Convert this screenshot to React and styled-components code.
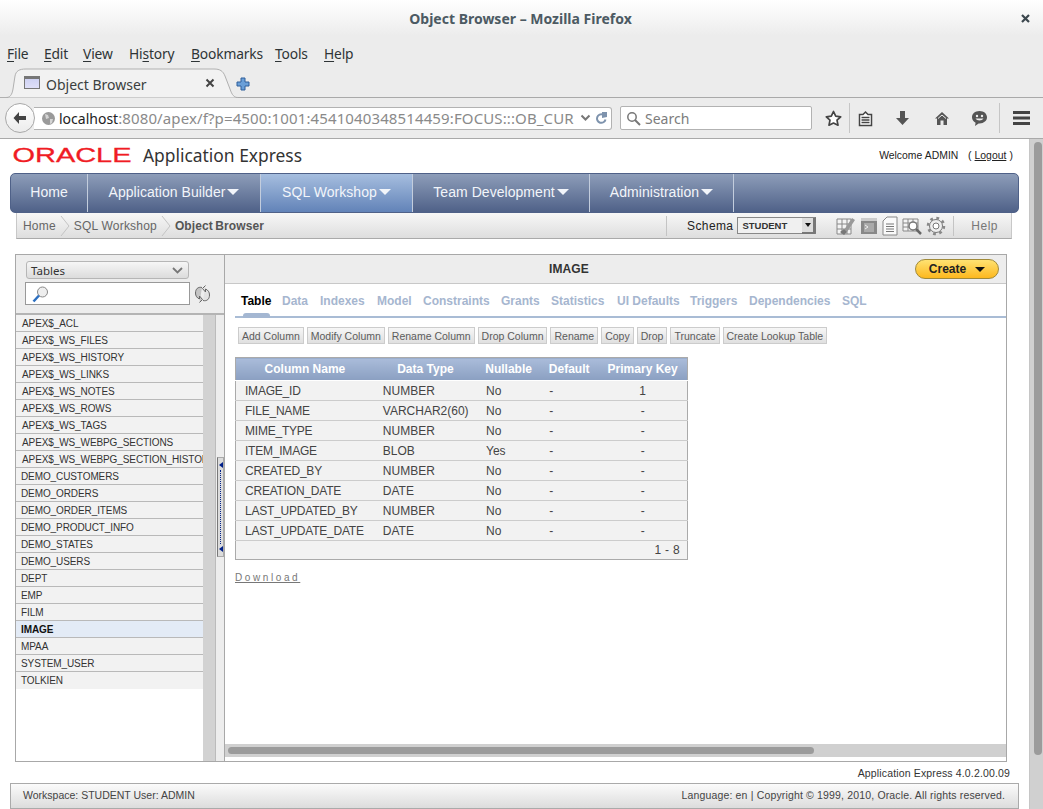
import React from "react";
import styled, { createGlobalStyle } from "styled-components";

const Global = createGlobalStyle`
  html, body { margin: 0; padding: 0; background: #fff; overflow: hidden; }
  * { box-sizing: border-box; }
  #root { width: 1043px; height: 809px; overflow: hidden; }
`;

const Window = styled.div`
  width: 1043px; height: 809px; display: flex; flex-direction: column;
  font-family: "Liberation Sans", Arial, sans-serif; color: #333; overflow: hidden;
`;

/* ---------- browser chrome ---------- */
const Chrome = styled.div`
  height: 139px; flex: none; display: flex; flex-direction: column;
  font-family: "Noto Sans", sans-serif;
  background: linear-gradient(#fff 0, #ececec 36px, #ececec 100%);
  border-bottom: 1px solid #a9a9a9;
`;
const TitleBar = styled.div`
  height: 40px; flex: none; display: flex; align-items: center; padding: 0 12px 3px 0;
`;
const Title = styled.div`
  flex: 1; text-align: center; font-size: 14px; font-weight: 700; color: #4c5a63; margin-left: 21px;
`;
const MenuBar = styled.div`
  height: 28px; flex: none; display: flex; align-items: center; padding: 0 0 2px 7px; font-size: 13.8px; letter-spacing: -.15px; color: #2e3436;
`;
const MenuItem = styled.span`
  width: ${p => p.$w}px; flex: none; u { text-underline-offset: 2px; }
`;
const TabStrip = styled.div`
  height: 30px; flex: none; display: flex; align-items: flex-end; border-bottom: 1px solid #a9a9a9; padding-left: 6px;
`;
const BrowserTab = styled.div`
  position: relative; width: 232px; height: 30px; margin-bottom: -1px; display: flex; align-items: center;
  padding: 3px 0 0 18px; font-size: 14px; color: #3b3f40;
`;
const TabShape = styled.svg`
  position: absolute; left: 0; top: 0; width: 232px; height: 30px; overflow: visible;
`;
const Favicon = styled.div`
  position: relative; width: 16px; height: 13px; margin-top: -4px; border: 1px solid #777; border-top-width: 3px; background: linear-gradient(#cfd2f4, #dfe0f8); flex: none; margin-right: 6px;
`;
const TabLabel = styled.span`
  position: relative; flex: 1;
`;
const TabClose = styled.svg`
  position: relative; width: 10px; height: 10px; margin: -4px 23px 0 0;
`;
const NewTab = styled.svg`
  width: 14px; height: 14px; margin: 0 0 6px -2px;
`;
const NavBar = styled.div`
  flex: 1; display: flex; align-items: center; padding: 0 0 0 5px;
`;
const BackButton = styled.div`
  width: 30px; height: 30px; border-radius: 50%; border: 1px solid #a8a8a8; background: linear-gradient(#fff, #ececec);
  display: flex; align-items: center; justify-content: center; flex: none; position: relative; z-index: 1;
`;
const UrlBox = styled.div`
  width: 578px; height: 23px; margin-left: -1px; border: 1px solid #b2b2b2; border-left: none; border-radius: 0 3px 3px 0; background: #fff;
  display: flex; align-items: center; padding-left: 7px; font-size: 15px; flex: none; color: #8a8a8a;
`;
const UrlText = styled.div`
  width: 518px; margin-left: 3px; white-space: nowrap; overflow: hidden; letter-spacing: .12px;
  b { font-weight: 400; font-size: 14px; letter-spacing: 0; color: #222; }
`;
const SearchBox = styled.div`
  width: 192px; height: 24px; margin-left: 8px; border: 1px solid #b2b2b2; border-radius: 2px; background: #fff; flex: none;
  display: flex; align-items: center; padding-left: 5px; gap: 4px; font-size: 14px; color: #7c7c7c;
`;
const ToolIcons = styled.div`
  display: flex; align-items: center; flex: none; height: 30px; margin-left: 6px;
`;
const ToolSlot = styled.div`
  width: ${p => p.$w}px; display: flex; justify-content: center; align-items: center; height: 30px;
  ${p => p.$sep ? "border-left: 1px solid #c6c6c6;" : ""}
`;

/* ---------- page ---------- */
const Viewport = styled.div`
  flex: 1; display: flex; min-height: 0;
`;
const Page = styled.div`
  width: 1029px; flex: none; display: flex; flex-direction: column; background: #fff; font-size: 11px;
`;
const Scrollbar = styled.div`
  flex: 1; background: #d0d0d0; padding: 3px 3px 0 4px; border-left: 1px solid #c6c6c6;
`;
const ScrollThumb = styled.div`
  height: 613px; width: 8px; border-radius: 4px; background: #9b9b9b;
`;
const Header = styled.div`
  height: 34px; flex: none; display: flex; align-items: center; padding: 0 16px 2px 13px;
`;
const Logo = styled.svg`
  width: 120px; height: 18px; flex: none; overflow: visible;
`;
const AppName = styled.div`
  margin-left: 10px; font-size: 17.4px; color: #333; flex: 1; font-family: "Noto Sans", sans-serif;
`;
const Welcome = styled.div`
  font-size: 10.4px; color: #222; word-spacing: .3px; u { color: #222; }
`;
const MainNav = styled.nav`
  height: 40px; margin-left: 10px; width: 1009px; flex: none; display: flex; border-radius: 5px; border: 1px solid #4f6188;
  background: linear-gradient(#8d9db9, #4f6188);
`;
const NavTab = styled.div`
  width: ${p => p.$w}px; flex: none; display: flex; align-items: center; justify-content: center; gap: 2px; padding-bottom: 2px;
  color: #f2f5fa; font-size: 14px; letter-spacing: .05px; border-right: 1px solid #c3cddd;
  ${p => p.$active ? "background: linear-gradient(#a6bedf, #6283b8);" : ""}
`;
const Caret = styled.span`
  width: 0; height: 0; border-left: 6px solid transparent; border-right: 6px solid transparent; border-top: 6px solid #f2f5fa;
`;
const Crumbs = styled.div`
  height: 26px; width: 996px; margin-left: 16px; flex: none; display: flex; align-items: center;
  background: linear-gradient(#f7f7f7, #dedede); border: 1px solid #c8c8c8; border-top: none; border-bottom: 1px solid #aaa;
  font-size: 12px; color: #666; padding-left: 6px; letter-spacing: .2px;
`;
const CrumbSep = styled.svg`
  width: 10px; height: 22px; margin: 0 4px; flex: none;
`;
const CrumbCurrent = styled.b`
  flex: 1; color: #555; word-spacing: -1px; letter-spacing: .1px;
`;
const SchemaArea = styled.div`
  width: 345px; height: 20px; flex: none; display: flex; align-items: center; border-left: 1px solid #c4c4c4; padding-left: 20px;
  color: #222; letter-spacing: .4px;
`;
const SchemaSelect = styled.div`
  width: 79px; height: 17px; margin-left: 4px; border: 1px solid #888; border-right-color: #777; background: #f0f0f0; display: flex; align-items: center;
  padding-left: 4px; font-size: 9.5px; font-weight: 700; color: #333; letter-spacing: 0; justify-content: space-between;
`;
const SchemaArrow = styled.div`
  width: 13px; height: 16px; background: #ddd; border-right: 2px solid #777; border-bottom: 2px solid #777; display: flex; align-items: center; justify-content: center;
  &::after { content: ""; border-left: 3px solid transparent; border-right: 3px solid transparent; border-top: 4px solid #111; }
`;
const SchemaIcons = styled.div`
  display: flex; align-items: center; gap: 2px; margin-left: 20px; width: 117px;
`;
const HelpLink = styled.div`
  flex: 1; height: 20px; border-left: 1px solid #c4c4c4; display: flex; align-items: center; justify-content: center; padding-left: 4px; color: #777; letter-spacing: .5px;
`;

/* ---------- object browser panel ---------- */
const Panel = styled.div`
  width: 992px; height: 508px; margin: 15px 0 0 15px; flex: none; display: flex; border: 1px solid #a8a8a8;
`;
const Sidebar = styled.aside`
  width: 209px; flex: none; display: flex; flex-direction: column; border-right: 1px solid #a8a8a8; background: #ededed;
`;
const SideTop = styled.div`
  height: 60px; flex: none; padding: 6px 0 0 9px; border-bottom: 2px solid #b4b4b4;
`;
const FakeSelect = styled.div`
  width: 163px; height: 18px; margin-left: 1px; border: 1px solid #b6b6b6; border-radius: 3px; background: linear-gradient(#f6f6f6, #dcdcdc);
  font-family: "Noto Sans", sans-serif; font-size: 11.5px; color: #333; display: flex; align-items: center; justify-content: space-between; padding: 1px 5px 0 4px;
`;
const SearchRow = styled.div`
  display: flex; align-items: center; margin-top: 3px;
`;
const Filter = styled.div`
  width: 165px; height: 23px; border: 1px solid #999; background: #fff; padding: 1px 0 0 6px; display: flex; align-items: center;
`;
const ListArea = styled.div`
  flex: 1; display: flex; min-height: 0;
`;
const ListBox = styled.div`
  width: 187px; flex: none; background: #fff;
`;
const ListRow = styled.div`
  height: 17px; display: flex; align-items: center; padding-left: ${p => p.$pad}px; font-size: 10px; letter-spacing: -.1px; color: #333; white-space: nowrap; overflow: hidden;
  background: ${p => p.$active ? "#e3ebf6" : "#f2f2f2"}; border-bottom: 1px solid ${p => p.$last ? "#f2f2f2" : "#b9b9b9"};
  ${p => p.$active ? "font-weight: 700; color: #111;" : ""}
`;
const ListTrack = styled.div`
  width: 13px; flex: none; background: #d2d2d2; border-right: 1px solid #bbb;
`;
const Splitter = styled.div`
  flex: 1; display: flex; align-items: flex-start; padding-left: 1px;
`;
const SplitHandle = styled.div`
  width: 7px; height: 100px; margin-top: 142px; background: #dcdcdc; border: 1px solid #aaa; border-left-color: #777; display: flex; flex-direction: column; align-items: center; justify-content: space-between; padding: 4px 0;
`;
const HandleArrow = styled.span`
  width: 0; height: 0; border-top: 3px solid transparent; border-bottom: 3px solid transparent; border-right: 4px solid #00208a;
`;
const HandleDots = styled.span`
  flex: 1; border-left: 1px dotted #00208a; margin: 2px 0;
`;
const Content = styled.section`
  flex: 1; display: flex; flex-direction: column; min-width: 0; background: #fff;
`;
const ContentHead = styled.div`
  height: 29px; flex: none; background: #ededed; border-bottom: 1px solid #c8c8c8; display: flex; align-items: center; padding: 0 7px 1px 0;
`;
const ContentTitle = styled.div`
  flex: 1; text-align: center; font-weight: 700; font-size: 12px; color: #333; padding-right: 2px; letter-spacing: .1px;
`;
const CreateBtn = styled.div`
  width: 84px; height: 20px; border-radius: 10px; border: 1px solid #a08a3a; background: linear-gradient(#ffe272, #fdb81e);
  display: flex; align-items: center; justify-content: center; gap: 9px; font-weight: 700; font-size: 12px; color: #222;
  &::after { content: ""; border-left: 5px solid transparent; border-right: 5px solid transparent; border-top: 5px solid #111; margin-top: 2px; }
`;
const TabsRow = styled.div`
  height: 34px; flex: none; margin-left: 10px; display: flex; align-items: center; padding: 1px 0 0 6px; border-bottom: 2px solid #a9bcd5; font-size: 12px; font-weight: 700; color: #a6b6cf;
`;
const ObjTab = styled.span`
  width: ${p => p.$w}px; flex: none; position: relative; ${p => p.$active ? `
    color: #000;
    &::after { content: ""; position: absolute; left: 2px; top: 19px; width: 27px; height: 5px; background: #a4b7d2; border-radius: 3px 3px 0 0; }
  ` : ""}
`;
const ActionRow = styled.div`
  display: flex; gap: 3px; margin: 9px 0 0 13px; flex: none;
`;
const ActionBtn = styled.div`
  height: 17px; padding: 0 3px; border: 1px solid #ccc; background: linear-gradient(#f6f6f6, #e0e0e0); display: flex; align-items: center; font-size: 10.5px; color: #5c5c5c;
`;
const ReportTable = styled.table`
  width: 453px; margin: 13px 0 0 10px; flex: none; border-collapse: collapse; table-layout: fixed; border: 1px solid #aaa; font-size: 12px;
`;
const Th = styled.th`
  height: 23px; padding: 0; font-size: 12px; font-weight: 700; color: #fff; background: linear-gradient(#aabcda, #8a9fc1);
  border-bottom: 1px solid #fff; text-align: center;
`;
const Td = styled.td`
  height: 20px; padding: 0 0 0 ${p => p.$center ? 0 : 9}px; background: #f2f2f2; color: #444; border-bottom: 1px solid #ccc; white-space: nowrap; overflow: hidden;
  text-align: ${p => p.$center ? "center" : "left"}; letter-spacing: ${p => p.$tight ? "-.22px" : "0"};
`;
const FootCell = styled.td`
  height: 19px; background: #f2f2f2; text-align: right; padding-right: 7px; color: #444; letter-spacing: .3px;
`;
const Download = styled.div`
  margin: 12px 0 0 10px; font-size: 10px; letter-spacing: 2.6px; color: #777; text-decoration: underline; flex: none;
`;
const HBar = styled.div`
  margin-top: auto; margin-bottom: 4px; height: 13px; flex: none; background: #d0d0d0; padding: 3px; display: flex;
`;
const HThumb = styled.div`
  width: 586px; height: 7px; border-radius: 4px; background: #9b9b9b;
`;
const VersionLine = styled.div`
  height: 21px; flex: none; width: 1010px; text-align: right; padding-top: 5px; font-size: 10.5px; color: #333; letter-spacing: .15px;
`;
const Footer = styled.footer`
  height: 26px; width: 1009px; margin-left: 10px; flex: none; display: flex; align-items: center; justify-content: space-between; padding: 0 13px 3px 12px;
  background: linear-gradient(#fbfbfb, #dcdcdc); border: 1px solid #aaa; font-size: 10.5px; color: #444;
`;
const FooterRight = styled.span`
  letter-spacing: .16px;
`;

const Ico = styled.svg`
  display: block; flex: none; margin-left: ${p => p.$ml || 0}px;
`;

const menus = [
  [37, <><u>F</u>ile</>], [39, <><u>E</u>dit</>], [46, <><u>V</u>iew</>], [62, <>Hi<u>s</u>tory</>],
  [84, <><u>B</u>ookmarks</>], [49, <><u>T</u>ools</>], [40, <><u>H</u>elp</>],
];
const navs = [
  ["Home", 77, false, false], ["Application Builder", 173, true, false], ["SQL Workshop", 152, true, true],
  ["Team Development", 177, true, false], ["Administration", 144, true, false],
];
const tables = ["APEX$_ACL","APEX$_WS_FILES","APEX$_WS_HISTORY","APEX$_WS_LINKS","APEX$_WS_NOTES","APEX$_WS_ROWS","APEX$_WS_TAGS","APEX$_WS_WEBPG_SECTIONS","APEX$_WS_WEBPG_SECTION_HISTORY","DEMO_CUSTOMERS","DEMO_ORDERS","DEMO_ORDER_ITEMS","DEMO_PRODUCT_INFO","DEMO_STATES","DEMO_USERS","DEPT","EMP","FILM","IMAGE","MPAA","SYSTEM_USER","TOLKIEN"];
const objTabs = [["Table",41],["Data",38],["Indexes",57],["Model",46],["Constraints",78],["Grants",50],["Statistics",66],["UI Defaults",73],["Triggers",59],["Dependencies",93],["SQL",30]];
const actions = ["Add Column","Modify Column","Rename Column","Drop Column","Rename","Copy","Drop","Truncate","Create Lookup Table"];
const rows = [
  ["IMAGE_ID","NUMBER","No","1"],["FILE_NAME","VARCHAR2(60)","No","-"],["MIME_TYPE","NUMBER","No","-"],["ITEM_IMAGE","BLOB","Yes","-"],
  ["CREATED_BY","NUMBER","No","-"],["CREATION_DATE","DATE","No","-"],["LAST_UPDATED_BY","NUMBER","No","-"],["LAST_UPDATE_DATE","DATE","No","-"],
];

export default function App() {
  return (
    <Window>
      <Global />
      <Chrome>
        <TitleBar>
          <Title>Object Browser – Mozilla Firefox</Title>
          <Ico width="11" height="11" viewBox="0 0 11 11"><path d="M2 2l7 7M9 2l-7 7" stroke="#3c474e" strokeWidth="2.2" /></Ico>
        </TitleBar>
        <MenuBar>{menus.map(([w, l], i) => <MenuItem key={i} $w={w}>{l}</MenuItem>)}</MenuBar>
        <TabStrip>
          <BrowserTab>
            <TabShape viewBox="0 0 232 30"><path d="M-6 29.500H0C4 29.500 6 27 7 21L9 8C10 3 13 1 20 1H208C214 1 217 3 219 8L224 21C226 27 228 29.500 232 29.500" fill="#f2f2f2" stroke="#b0b0b0" /></TabShape>
            <Favicon />
            <TabLabel>Object Browser</TabLabel>
            <TabClose viewBox="0 0 10 10"><path d="M1.500 1.500l7 7M8.500 1.500l-7 7" stroke="#444" strokeWidth="2" /></TabClose>
          </BrowserTab>
          <NewTab viewBox="0 0 14 14"><path d="M5 1h4v4h4v4H9v4H5V9H1V5h4z" fill="#6a9fd8" stroke="#2f5f9a" strokeWidth="1" /></NewTab>
        </TabStrip>
        <NavBar>
          <BackButton>
            <Ico width="16" height="14" viewBox="0 0 16 14"><path d="M7 1L1.500 7 7 13V9h7V5H7z" fill="#444" /></Ico>
          </BackButton>
          <UrlBox>
            <Ico width="15" height="15" viewBox="0 0 15 15"><circle cx="7.500" cy="7.500" r="6.500" fill="#9a9a9a" /><path d="M4 3l3 1 1 3-3 1zM9 8l3 0-1 4-2 1z" fill="#d5d5d5" /></Ico>
            <UrlText><b>localhost</b>:8080/apex/f?p=4500:1001:4541040348514459:FOCUS:::OB_CUR</UrlText>
            <Ico $ml={3} width="11" height="8" viewBox="0 0 11 8"><path d="M1.500 1.500L5.500 5.500 9.500 1.500" fill="none" stroke="#777" strokeWidth="2" /></Ico>
            <Ico $ml={4} width="13" height="13" viewBox="0 0 13 13"><path d="M10.500 7.500A4.300 4.300 0 1 1 8 2.600" fill="none" stroke="#7e93ad" strokeWidth="2" /><path d="M7 0v6l5-1V0z" fill="#7e93ad" /></Ico>
          </UrlBox>
          <SearchBox>
            <Ico width="15" height="15" viewBox="0 0 15 15"><circle cx="6" cy="6" r="4.200" fill="none" stroke="#777" strokeWidth="1.500" /><path d="M9 9l5 5" stroke="#777" strokeWidth="2" /></Ico>
            Search
          </SearchBox>
          <ToolIcons>
            <ToolSlot $w={31}>
              <Ico width="17" height="17" viewBox="0 0 17 17"><path d="M8.500 1.500l2.200 4.700 5 .6-3.700 3.400 1 5L8.500 13l-4.500 2.200 1-5L1.300 6.800l5-.6z" fill="#fff" stroke="#444" strokeWidth="1.700" strokeLinejoin="round" /></Ico>
            </ToolSlot>
            <ToolSlot $w={32} $sep>
              <Ico width="15" height="17" viewBox="0 0 15 17"><path d="M1.500 4.500H5L7.500 2 10 4.500h3.500v11h-12z" fill="#fff" stroke="#444" strokeWidth="1.500" /><path d="M3.500 7.500h8M3.500 10h8M3.500 12.500h8" stroke="#444" strokeWidth="1.500" /></Ico>
            </ToolSlot>
            <ToolSlot $w={43}>
              <Ico width="15" height="16" viewBox="0 0 15 16"><path d="M5 1h5v7h4l-6.500 7L1 8h4z" fill="#555" /></Ico>
            </ToolSlot>
            <ToolSlot $w={35}>
              <Ico width="16" height="15" viewBox="0 0 16 15"><path d="M8 1L1 7.500h2V14h3.500V9.500h3V14H13V7.500h2z" fill="#555" /><path d="M8 4L4 7.500" stroke="#eee" strokeWidth="1" /><path d="M8 4l4 3.500" stroke="#eee" strokeWidth="1" /></Ico>
            </ToolSlot>
            <ToolSlot $w={40}>
              <Ico width="17" height="17" viewBox="0 0 17 17"><path d="M8.500 1C4 1 1 3.800 1 7.300c0 2.600 1.500 4.500 3.600 5.500L4 16l3.600-2.600h.9c4.500 0 7.500-2.700 7.500-6.100S13 1 8.500 1z" fill="#555" /><circle cx="6" cy="6" r="1.200" fill="#eee" /><circle cx="11" cy="6" r="1.200" fill="#eee" /><path d="M4.500 8.500c1.500 2.500 6.500 2.500 8 0z" fill="#eee" /></Ico>
            </ToolSlot>
            <ToolSlot $w={44} $sep>
              <Ico width="17" height="14" viewBox="0 0 17 14"><path d="M0 0h17v3H0zM0 5.500h17v3H0zM0 11h17v3H0z" fill="#444" /></Ico>
            </ToolSlot>
          </ToolIcons>
        </NavBar>
      </Chrome>
      <Viewport>
        <Page>
          <Header>
            <Logo viewBox="0 0 120 18">
              <text x="-0.5" y="16" fontFamily="Liberation Sans" fontSize="20.5" textLength="119" lengthAdjust="spacingAndGlyphs" fill="#f01c24" stroke="#f01c24" strokeWidth=".3">ORACLE</text>
            </Logo>
            <AppName>Application Express</AppName>
            <Welcome>Welcome ADMIN &nbsp; ( <u>Logout</u> )</Welcome>
          </Header>
          <MainNav>
            {navs.map(([l, w, c, a]) => <NavTab key={l} $w={w} $active={a}>{l}{c && <Caret />}</NavTab>)}
          </MainNav>
          <Crumbs>
            Home
            <CrumbSep viewBox="0 0 10 22"><path d="M1 1l8 10-8 10" fill="none" stroke="#c4c4c4" /></CrumbSep>
            SQL Workshop
            <CrumbSep viewBox="0 0 10 22"><path d="M1 1l8 10-8 10" fill="none" stroke="#c4c4c4" /></CrumbSep>
            <CrumbCurrent>Object Browser</CrumbCurrent>
            <SchemaArea>
              Schema
              <SchemaSelect>STUDENT<SchemaArrow /></SchemaSelect>
              <SchemaIcons>
                <Ico width="20" height="20" viewBox="0 0 20 20"><path d="M1 3h14v15H1zM1 8h14M1 13h14M6 3v15M11 3v15" fill="#f4f4f4" stroke="#888" /><path d="M8 14L16 2l3 2-8 12z" fill="#999" /><path d="M4 16l4-3 3 3-3 3z" fill="#777" /></Ico>
                <Ico $ml={3} width="16" height="16" viewBox="0 0 16 16"><path d="M0 0h16v16H0z" fill="#888" /><path d="M0 0h16v3H0z" fill="#ccc" /><path d="M3 5h10v9H3z" fill="#aaa" /><path d="M4 7l3 2-3 2" fill="none" stroke="#eee" /></Ico>
                <Ico $ml={3} width="16" height="20" viewBox="0 0 16 20"><path d="M5 1h10v18H1V5z" fill="#fafafa" stroke="#888" /><path d="M4 8h8M4 10.500h8M4 13h8M4 15.500h8" stroke="#777" /></Ico>
                <Ico $ml={2} width="20" height="20" viewBox="0 0 20 20"><path d="M1 3h15v12H1zM1 7h15M1 11h15M6 3v12M11 3v12" fill="#f4f4f4" stroke="#888" /><circle cx="11" cy="10" r="4" fill="#fff" stroke="#777" strokeWidth="1.500" /><path d="M14 13l5 5" stroke="#666" strokeWidth="2.500" /></Ico>
                <Ico $ml={2} width="20" height="20" viewBox="0 0 20 20"><circle cx="10" cy="10" r="6.500" fill="#eee" stroke="#777" strokeWidth="1" /><circle cx="10" cy="10" r="8" fill="none" stroke="#888" strokeWidth="2.500" strokeDasharray="2.800 3.500" /><circle cx="10" cy="10" r="3" fill="#fff" stroke="#777" /></Ico>
              </SchemaIcons>
              <HelpLink>Help</HelpLink>
            </SchemaArea>
          </Crumbs>
          <Panel>
            <Sidebar>
              <SideTop>
                <FakeSelect>
                  Tables
                  <Ico width="11" height="7" viewBox="0 0 11 7"><path d="M1 1l4.500 4.500L10 1" fill="none" stroke="#777" strokeWidth="1.800" /></Ico>
                </FakeSelect>
                <SearchRow>
                  <Filter>
                    <Ico width="17" height="17" viewBox="0 0 17 17"><circle cx="10.500" cy="6" r="5" fill="#eee" stroke="#888" /><path d="M7 9.500L1.500 15.500" stroke="#2c6fc0" strokeWidth="2.500" /></Ico>
                  </Filter>
                  <Ico $ml={4} width="17" height="18" viewBox="0 0 17 18"><path d="M8 2.500C4 1.500 1.500 4 1.500 8c0 3 1.500 5 4 6V11l3 3.500-3 3" fill="#c4c4c4" stroke="#666" /><path d="M9 15.500c4 1 6.500-1.500 6.500-5.500 0-3-1.500-5-4-6v3l-3-3.500 3-3" fill="#e2e2e2" stroke="#666" /></Ico>
                </SearchRow>
              </SideTop>
              <ListArea>
                <ListBox>
                  {tables.map((t, i) => (
                    <ListRow key={t} $pad={i < 9 ? 6 : 5} $active={t === "IMAGE"} $last={t === "TOLKIEN"}>{t}</ListRow>
                  ))}
                </ListBox>
                <ListTrack />
                <Splitter>
                  <SplitHandle><HandleArrow /><HandleDots /><HandleArrow /></SplitHandle>
                </Splitter>
              </ListArea>
            </Sidebar>
            <Content>
              <ContentHead>
                <ContentTitle>IMAGE</ContentTitle>
                <CreateBtn>Create</CreateBtn>
              </ContentHead>
              <TabsRow>
                {objTabs.map(([l, w], i) => <ObjTab key={l} $w={w} $active={i === 0}>{l}</ObjTab>)}
              </TabsRow>
              <ActionRow>{actions.map(a => <ActionBtn key={a}>{a}</ActionBtn>)}</ActionRow>
              <ReportTable>
                <colgroup><col width="138" /><col width="103" /><col width="63" /><col width="58" /><col width="89" /></colgroup>
                <thead><tr><Th>Column Name</Th><Th>Data Type</Th><Th>Nullable</Th><Th>Default</Th><Th>Primary Key</Th></tr></thead>
                <tbody>
                  {rows.map(r => (
                    <tr key={r[0]}><Td $tight>{r[0]}</Td><Td>{r[1]}</Td><Td>{r[2]}</Td><Td>-</Td><Td $center>{r[3]}</Td></tr>
                  ))}
                  <tr><FootCell colSpan={5}>1 - 8</FootCell></tr>
                </tbody>
              </ReportTable>
              <Download>Download</Download>
              <HBar><HThumb /></HBar>
            </Content>
          </Panel>
          <VersionLine>Application Express 4.0.2.00.09</VersionLine>
          <Footer>
            <span>Workspace: STUDENT User: ADMIN</span>
            <FooterRight>Language: en | Copyright © 1999, 2010, Oracle. All rights reserved.</FooterRight>
          </Footer>
        </Page>
        <Scrollbar><ScrollThumb /></Scrollbar>
      </Viewport>
    </Window>
  );
}
